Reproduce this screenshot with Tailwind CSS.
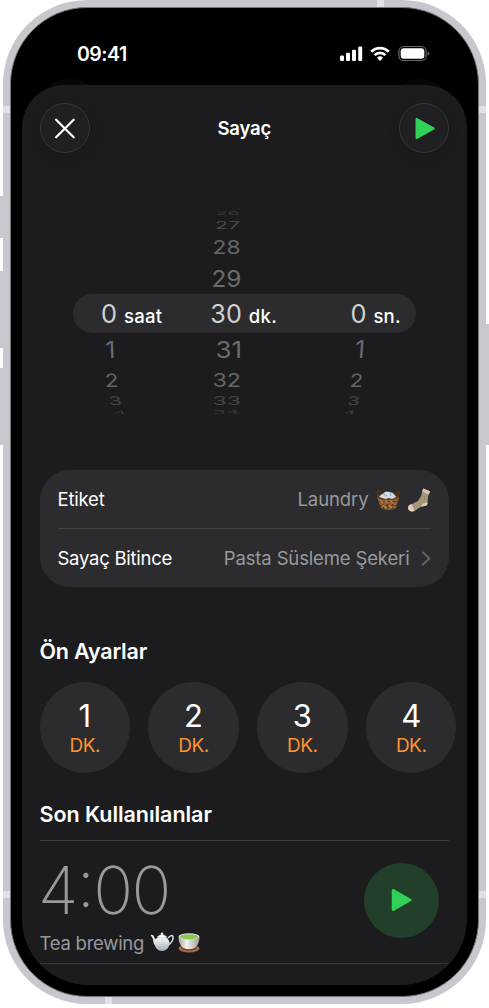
<!DOCTYPE html>
<html lang="tr">
<head>
<meta charset="utf-8">
<title>Sayaç</title>
<script src="https://cdn.jsdelivr.net/npm/@tailwindcss/browser@4"></script>
</head>
<body class="bg-white w-[489px] h-[1008px] overflow-hidden font-['Inter','Liberation_Sans',sans-serif] text-white">
<div class="relative w-[489px] h-[1008px] px-[3px]">
  <!-- side buttons -->
  <div class="absolute left-0 top-[196px] w-4 h-[42px] bg-[#c8c7cd]"></div>
  <div class="absolute left-0 top-[271px] w-4 h-[77px] bg-[#c8c7cd]"></div>
  <div class="absolute left-0 top-[368px] w-4 h-[77px] bg-[#c8c7cd]"></div>
  <div class="absolute right-0 top-[324px] w-4 h-[121px] bg-[#c8c7cd]"></div>

  <!-- metal frame -->
  <div class="relative w-[483px] h-[1004px] rounded-[84px] bg-[#c8c7cd] pt-[7px] px-[7px] overflow-hidden">
    <div class="absolute left-0 top-[106px] w-full h-[7px] bg-[#e2e1e6]"></div>
    <div class="absolute left-0 top-[891px] w-full h-[7px] bg-[#e2e1e6]"></div>
    <div class="absolute left-[374px] top-0 w-[7px] h-20 bg-[#e2e1e6]"></div>
    <div class="absolute left-[102px] bottom-0 w-[7px] h-20 bg-[#e2e1e6]"></div>

    <div class="relative w-[469px] h-[990px] rounded-[77px] bg-black border border-[#77767b] px-[11px] overflow-hidden">
      <!-- status bar -->
      <div class="h-[77px] flex items-start pt-[35px] pl-[55px] pr-[37px]">
        <div class="text-[19.500px] leading-[22px] font-semibold tracking-[-0.5px]">09:41</div>
        <svg class="ml-auto mt-[2px]" width="92" height="18" viewBox="0 0 92 18" fill="#fff">
          <rect x="2" y="10.5" width="4" height="5.5" rx="1.2"/><rect x="8" y="7.7" width="4" height="8.3" rx="1.2"/><rect x="14" y="4.7" width="4" height="11.3" rx="1.2"/><rect x="20.2" y="1.5" width="4" height="14.500" rx="1.2"/>
          <g fill="none" stroke="#fff" stroke-width="2.700"><path d="M33.300 6.700a12.300 12.300 0 0 1 17.400 0"/><path d="M36.600 10.100a7.700 7.700 0 0 1 10.800 0"/></g>
          <path d="M42 15.900l-3-3.200a4.400 4.400 0 0 1 6 0z"/>
          <rect x="60.900" y="1.500" width="27.200" height="14" rx="4.600" fill="none" stroke="#68686a" stroke-width="1.200"/>
          <rect x="62.700" y="3.300" width="23.600" height="10.500" rx="3"/>
          <path d="M89.700 6.200q1.600.8 1.600 2.400t-1.600 2.400z" fill="#68686a"/>
        </svg>
      </div>

      <!-- cards behind the sheet -->
      <div class="absolute left-[30px] top-[71px] w-[56px] h-[50px] rounded-[25px] bg-[#070708]"></div>
      <div class="absolute right-[30px] top-[71px] w-[56px] h-[50px] rounded-[25px] bg-[#070708]"></div>

      <!-- sheet -->
      <main class="relative w-[445px] h-[900px] rounded-t-[42px] rounded-b-[66px] bg-[#1c1c1e] overflow-hidden pt-[18px] pl-[17.500px]">
        <header class="w-[409.500px] h-[50px] flex items-center justify-between">
          <div class="size-[50px] rounded-full border border-[#38383a] bg-[#202022] shadow-[0_4px_14px_rgba(0,0,0,0.12)] flex items-center justify-center">
            <svg width="24" height="24" viewBox="0 0 24 24" stroke="#fff" stroke-width="2.200" stroke-linecap="round"><path d="M3.100 3.700l17.600 17.600M20.700 3.700L3.100 21.300"/></svg>
          </div>
          <h1 class="text-[18.500px] font-semibold tracking-[-0.2px] pt-[2px]">Sayaç</h1>
          <div class="size-[50px] rounded-full border border-[#38383a] bg-[#202022] shadow-[0_4px_14px_rgba(0,0,0,0.12)] flex items-center justify-center">
            <svg width="24" height="24" viewBox="0 0 24 24" fill="#30d158" stroke="#30d158" stroke-width="2" stroke-linejoin="round"><path d="M4.500 3v19L21.700 12.500z"/></svg>
          </div>
        </header>

        <!-- wheel picker -->
        <svg class="-ml-[17.500px] block" width="445" height="317" viewBox="22 153 445 317">
          <rect x="73" y="294" width="343" height="39" rx="19.500" fill="#2c2c2e"/>
          <g fill="#6b6b6d" font-size="24">
            <g transform="translate(215.500 215) scale(1 .2)" fill="#3a3a3c"><text textLength="24" lengthAdjust="spacingAndGlyphs">26</text></g>
            <g transform="translate(215 229.300) scale(1 .42)" fill="#4c4c4e"><text textLength="25" lengthAdjust="spacingAndGlyphs">27</text></g>
            <g transform="translate(212.500 254) scale(1 .77)" fill="#656567"><text textLength="28" lengthAdjust="spacingAndGlyphs">28</text></g>
            <g transform="translate(211.500 286.500) scale(1 .97)"><text textLength="30" lengthAdjust="spacingAndGlyphs">29</text></g>
            <g transform="translate(215.500 357.700) scale(1 .97)"><text textLength="26.500" lengthAdjust="spacingAndGlyphs">31</text></g>
            <g transform="translate(212.500 386.500) scale(1 .77)" fill="#656567"><text textLength="28.500" lengthAdjust="spacingAndGlyphs">32</text></g>
            <g transform="translate(212.500 405.400) scale(1 .5)" fill="#454547"><text textLength="28.500" lengthAdjust="spacingAndGlyphs">33</text></g>
            <g transform="translate(213 413.600) scale(1 .19)" fill="#3a3a3c"><text textLength="26" lengthAdjust="spacingAndGlyphs">34</text></g>

            <g transform="translate(105.800 357.700) skewX(2) scale(1 .97)"><text>1</text></g>
            <g transform="translate(105.300 386.500) skewX(3) scale(.92 .77)" fill="#656567"><text>2</text></g>
            <g transform="translate(109.300 405.400) skewX(8) scale(.88 .5)" fill="#454547"><text>3</text></g>
            <g transform="translate(114.500 413.600) skewX(16) scale(.75 .19)" fill="#3a3a3c"><text>4</text></g>

            <g transform="translate(354.500 358) skewX(-4) scale(1 1.020)"><text>1</text></g>
            <g transform="translate(349.200 386.500) skewX(-4) scale(.92 .77)" fill="#656567"><text>2</text></g>
            <g transform="translate(346.800 405.400) skewX(-8) scale(.85 .5)" fill="#454547"><text>3</text></g>
            <g transform="translate(343 413.600) skewX(-18) scale(.78 .19)" fill="#464648"><text>4</text></g>
          </g>
          <g fill="#d0d0d1" font-size="25.500">
            <text x="101" y="323" textLength="16" lengthAdjust="spacingAndGlyphs">0</text>
            <text x="210.300" y="323" textLength="31.500" lengthAdjust="spacingAndGlyphs">30</text>
            <text x="350.500" y="323" textLength="16" lengthAdjust="spacingAndGlyphs">0</text>
          </g>
          <g fill="#fff" font-size="18.500" font-weight="500">
            <text x="124" y="322.700" textLength="38">saat</text>
            <text x="248.800" y="322.700" textLength="28">dk.</text>
            <text x="373.500" y="322.700" textLength="27">sn.</text>
          </g>
        </svg>

        <section class="w-[409px] h-[117px] rounded-[30px] bg-[#2c2c2e] px-[18px] text-[18.500px]">
          <div class="h-[59px] flex items-center justify-between border-b border-[#434345] pt-[2px]">
            <span class="tracking-[-0.2px]">Etiket</span>
            <div class="flex items-center gap-[7px] text-[#98989f]">
              <span class="tracking-[-0.1px]">Laundry</span>
              <svg width="24" height="24" viewBox="0 0 24 24">
                <path d="M2 9C0 3 3 1 5 4.500M20 6c2-5 5-2 1 4" fill="none" stroke="#5c3a20" stroke-width="1.200"/>
                <path d="M1 9h22l-3 11q-8 4-15 0z" fill="#8f6035"/>
                <path d="M2.500 13.500h19M3.500 17.500h17M6 10l2 11M11 10l1 12M17 10l-1 11" stroke="#543218" stroke-width="1.200" stroke-dasharray="2 1"/>
                <path d="M4 12l3 3m2-3l3 3m2-3l3 3M7 17l3 3m3-3l3 3" stroke="#b78850" stroke-width="1.300"/>
                <ellipse cx="12" cy="8.500" rx="11" ry="3.500" fill="#603a1c"/>
                <path d="M3 8.500l4-3 3-2 4 .500 3 1 3 4-4 2-3-1-3 1-4-1z" fill="#d3dde6"/>
                <path d="M7 6l4 2m3-4l1 4" stroke="#91a3b3" stroke-width="1"/>
              </svg>
              <svg width="24" height="24" viewBox="0 0 24 24">
                <path d="M16 .500l7 3-2 5-.500 7q-.500 2.500-3 2.500l-4 1-6 4Q2 24.500 1 20q0-3 4-4l6-3 3-5z" fill="#a8977f"/>
                <path d="M16.300.500l-1 3.200 6.700 2.600 1-3z" fill="#d6c6ad"/>
                <path d="M4.500 16l3 7Q2 24.500 1 20q0-3 3.500-4z" fill="#e5cfbe"/>
                <path d="M20.500 14.500q0 3.500-3 3.500l-3 .500q0-3.500 6-4z" fill="#e2cbb6"/>
                <path d="M15 7l-1.500 5M18 8l-1 5" stroke="#8f7c66" stroke-width=".8"/>
              </svg>
            </div>
          </div>
          <div class="h-[58px] flex items-center pt-[2px]">
            <span class="tracking-[-0.250px]">Sayaç Bitince</span>
            <span class="ml-auto tracking-[-0.150px] text-[#98989f]">Pasta Süsleme Şekeri</span>
            <svg class="ml-[11px]" width="10" height="16" viewBox="0 0 10 16" fill="none" stroke="#646468" stroke-width="2" stroke-linecap="round" stroke-linejoin="round"><path d="M2 1.500l6.300 6L2 13.500"/></svg>
          </div>
        </section>

        <h2 class="mt-[49px] h-[30px] leading-[30px] text-[21.500px] font-semibold tracking-[-0.2px]">Ön Ayarlar</h2>
        <div class="mt-4 flex gap-[18.300px] w-[440px]">
          <div class="shrink-0 size-[90.500px] rounded-full bg-[#2c2c2e] flex flex-col items-center pt-[18px]"><span class="text-[31px] leading-[32px]">1</span><span class="text-[19px] leading-[28px] text-[#ff9230] tracking-[-0.5px]">DK.</span></div>
          <div class="shrink-0 size-[90.500px] rounded-full bg-[#2c2c2e] flex flex-col items-center pt-[18px]"><span class="text-[31px] leading-[32px]">2</span><span class="text-[19px] leading-[28px] text-[#ff9230] tracking-[-0.5px]">DK.</span></div>
          <div class="shrink-0 size-[90.500px] rounded-full bg-[#2c2c2e] flex flex-col items-center pt-[18px]"><span class="text-[31px] leading-[32px]">3</span><span class="text-[19px] leading-[28px] text-[#ff9230] tracking-[-0.5px]">DK.</span></div>
          <div class="shrink-0 size-[90.500px] rounded-full bg-[#2c2c2e] flex flex-col items-center pt-[18px]"><span class="text-[31px] leading-[32px]">4</span><span class="text-[19px] leading-[28px] text-[#ff9230] tracking-[-0.5px]">DK.</span></div>
        </div>

        <h2 class="mt-[26.500px] h-[30px] leading-[30px] text-[21.500px] font-semibold tracking-[-0.050px]">Son Kullanılanlar</h2>
        <div class="mt-[10.500px] w-[409px] h-[124px] border-y border-[#38383a] flex justify-between">
          <div class="pt-[15px] text-[#98989f]">
            <div class="-ml-[1.500px] text-[66px] leading-[68px] font-extralight tracking-[-1.700px] [font-feature-settings:'case']">4:00</div>
            <div class="mt-[5px] flex items-center gap-[6px] text-[18.500px] leading-[28px]">
              <span class="tracking-[-0.250px]">Tea brewing</span>
              <div class="flex gap-[3px]">
              <svg width="24" height="20" viewBox="0 0 24 20">
                <defs><linearGradient id="pot" x2="0" y2="1"><stop stop-color="#fff"/><stop offset="1" stop-color="#a3b1bb"/></linearGradient></defs>
                <path d="M18 6q5-5 5 0 0 4-5 7" fill="none" stroke="#d5dee5" stroke-width="1.500"/>
                <path d="M6 14Q3 12 3 7L.500 3q3-1 4 3l3 3z" fill="#dfe6ea"/>
                <ellipse cx="12" cy="11.500" rx="7.500" ry="7.500" fill="url(#pot)"/>
                <path d="M7 5q5-5 10 0-5 2-10 0z" fill="#fff" stroke="#aebac2" stroke-width=".5"/>
                <circle cx="12" cy="1.800" r="1.200" fill="#f5f8fa"/>
              </svg>
              <svg width="24" height="22" viewBox="0 0 24 22">
                <defs><linearGradient id="cup"><stop stop-color="#a9a8a2"/><stop offset=".4" stop-color="#f4f3ef"/><stop offset="1" stop-color="#9a9992"/></linearGradient></defs>
                <ellipse cx="12" cy="16.500" rx="10.500" ry="4" fill="#a66a46"/><ellipse cx="12" cy="15.500" rx="8" ry="3" fill="#633a25"/>
                <path d="M1.500 5h21q0 7-4.500 11-6 2.500-12 0-4.500-4-4.500-11z" fill="url(#cup)"/>
                <ellipse cx="12" cy="4.500" rx="10.500" ry="3.200" fill="#d4d6cc"/><ellipse cx="12" cy="4.800" rx="9" ry="2.400" fill="#86cc50"/>
              </svg>
              </div>
            </div>
          </div>
          <div class="mt-[22px] mr-[10px] size-[75px] rounded-full bg-[#223f29] flex items-center justify-center">
            <svg width="24" height="24" viewBox="0 0 24 24" fill="#30d158" stroke="#30d158" stroke-width="2.500" stroke-linejoin="round"><path d="M4 2.200v19.600L21.300 12z"/></svg>
          </div>
        </div>
      </main>
    </div>
  </div>
</div>
</body>
</html>
